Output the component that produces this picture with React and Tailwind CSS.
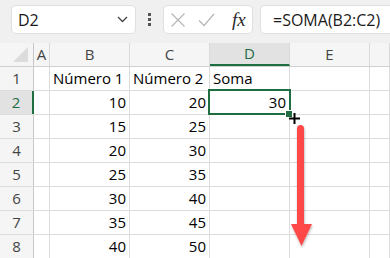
import React from 'react';

const cols = [
  { id: 'A', w: 'w-[16px]' },
  { id: 'B', w: 'w-[80px]' },
  { id: 'C', w: 'w-[80px]' },
  { id: 'D', w: 'w-[80px]' },
  { id: 'E', w: 'w-[80px]' },
  { id: '', w: 'flex-1' },
];

const rows = [
  ['', 'Número 1', 'Número 2', 'Soma', '', ''],
  ['', '10', '20', '30', '', ''],
  ['', '15', '25', '', '', ''],
  ['', '20', '30', '', '', ''],
  ['', '25', '35', '', '', ''],
  ['', '30', '40', '', '', ''],
  ['', '35', '45', '', '', ''],
  ['', '40', '50', '', '', ''],
];

function Toolbar() {
  return (
    <div className="h-[43px] bg-[#f0f0f0] flex items-start pt-[5px]">
      {/* name box */}
      <div className="ml-[11px] w-[125px] h-[29px] bg-white border border-[#e0e0e0] rounded-[5px] flex items-center pl-[6px] pr-[7px]">
        <span className="text-[16px] text-[#1a1a1a] flex-1">D2</span>
        <svg width="11" height="7" viewBox="0 0 11 7" fill="none" stroke="#444" strokeWidth="1.3">
          <path d="M1 1l4.5 4.5L10 1" />
        </svg>
      </div>
      {/* dots */}
      <div className="w-[27px] h-[29px] flex flex-col items-center justify-center gap-[2px]">
        <span className="w-[3px] h-[3px] bg-[#555]" />
        <span className="w-[3px] h-[3px] bg-[#555]" />
        <span className="w-[3px] h-[3px] bg-[#555]" />
      </div>
      {/* formula buttons */}
      <div className="w-[90px] h-[29px] bg-white border border-[#e0e0e0] rounded-[5px] flex items-center pl-[6px]">
        <svg width="16" height="16" viewBox="0 0 16 16" fill="none" stroke="#b5b5b5" strokeWidth="1.2">
          <path d="M1.5 1.5l13 13M14.5 1.5l-13 13" />
        </svg>
        <svg className="ml-[12px]" width="17" height="14" viewBox="0 0 17 14" fill="none" stroke="#b5b5b5" strokeWidth="1.2">
          <path d="M1 7.5l5 5L16 1" />
        </svg>
        <span className="ml-[17px] text-[19px] leading-none italic text-[#2a2a2a]" style={{ fontFamily: '"Liberation Serif", serif' }}>
          fx
        </span>
      </div>
      {/* formula input */}
      <div className="ml-[7px] flex-1 h-[29px] bg-white border border-[#e0e0e0] border-r-0 rounded-l-[5px] flex items-center pl-[12px]">
        <span className="text-[16px] text-[#1a1a1a]">=SOMA(B2:C2)</span>
      </div>
    </div>
  );
}

function HeaderRow() {
  return (
    <div className="h-[24px] flex bg-[#f5f5f5] border-b border-[#d0d0d0]">
      <div className="w-[34px] border-r border-[#c8c8c8] relative shrink-0">
        <svg className="absolute right-[5px] bottom-[4px]" width="15" height="15" viewBox="0 0 15 15">
          <path d="M15 0V15H0Z" fill="#dcdcdc" />
        </svg>
      </div>
      {cols.map((c) => (
        <div
          key={c.id || 'x'}
          className={`${c.w} shrink-0 flex items-center justify-center text-[15px] border-r border-[#dadada] ${
            c.id === 'D' ? 'bg-[#e2e2e2] text-[#1e6e42] border-b-2 border-b-[#1e6e42]' : 'text-[#444]'
          }`}
        >
          {c.id}
        </div>
      ))}
    </div>
  );
}

function Row({ n, cells }) {
  const active = n === 2;
  return (
    <div className="h-[24px] flex border-b border-[#dcdcdc]">
      <div
        className={`w-[34px] shrink-0 flex items-center justify-center text-[15px] ${
          active
            ? 'bg-[#e2e2e2] text-[#1e6e42] border-r-2 border-[#1e6e42]'
            : 'bg-[#f5f5f5] text-[#444] border-r border-[#c8c8c8]'
        }`}
      >
        {n}
      </div>
      {cols.map((c, i) => {
        const v = cells[i];
        const num = /^\d+$/.test(v);
        return (
          <div
            key={i}
            className={`${c.w} shrink-0 flex items-center text-[15px] text-black bg-white border-r border-[#dcdcdc] whitespace-nowrap overflow-hidden ${
              num ? 'justify-end pr-[3px]' : 'pl-[3px]'
            }`}
          >
            {v}
          </div>
        );
      })}
    </div>
  );
}

export default function App() {
  return (
    <div className="w-[390px] h-[258px] overflow-hidden bg-white" style={{ fontFamily: '"Open Sans", "Noto Sans", sans-serif' }}>
      <Toolbar />
      <div className="relative">
        <HeaderRow />
        {rows.map((r, i) => (
          <Row key={i} n={i + 1} cells={r} />
        ))}

        {/* selected cell D2 */}
        <div className="absolute left-[208px] top-[46px] w-[83px] h-[26px] border-2 border-[#1e6e42] pointer-events-none" />
        <div className="absolute left-[286px] top-[68px] w-[6px] h-[6px] bg-[#1e6e42] outline outline-1 outline-white" />

        {/* crosshair cursor */}
        <svg className="absolute left-[289px] top-[70px]" width="11" height="11" viewBox="0 0 11 11">
          <path d="M5.5 0V11M0 5.5H11" stroke="#000" strokeWidth="2" />
        </svg>

        {/* red arrow */}
        <svg className="absolute left-[288px] top-[80px]" width="26" height="126" viewBox="0 0 26 126">
          <defs>
            <filter id="sh" x="-50%" y="-10%" width="200%" height="130%">
              <feDropShadow dx="0.5" dy="1.5" stdDeviation="1.2" floodColor="#000" floodOpacity="0.3" />
            </filter>
          </defs>
          <g filter="url(#sh)">
            <rect x="9" y="2" width="7" height="102" rx="3.5" fill="#ff4848" />
            <path d="M3 101H24L13.5 123Z" fill="#ff4848" />
          </g>
        </svg>
      </div>
    </div>
  );
}
